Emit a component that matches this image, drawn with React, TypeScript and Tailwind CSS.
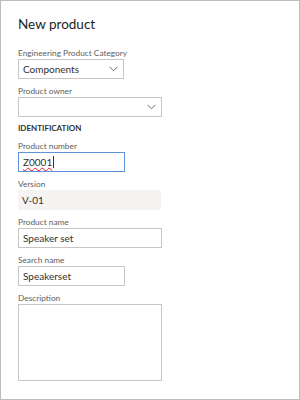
const Chevron = () => (
  <svg width="9" height="6" viewBox="0 0 9 6" fill="none" className="shrink-0">
    <path d="M0.5 0.8 L4.5 4.8 L8.5 0.8" stroke="#605e5c" strokeWidth="0.9" />
  </svg>
);

const Label = ({ children }: { children: React.ReactNode }) => (
  <div className="h-[12px] text-[8.3px] leading-[12px] text-[#605e5c]">{children}</div>
);

export default function App() {
  return (
    <div
      className="w-[300px] h-[400px] border border-[#bcbcbc] bg-white px-[17px] pt-[13px] text-[#323130]"
      style={{ fontFamily: 'Lato, "Open Sans", sans-serif' }}
    >
      <h1 className="h-[20px] text-[13.5px] leading-[20px] text-[#201f1e]">New product</h1>

      <div className="mt-[13px]">
        <Label>Engineering Product Category</Label>
        <div className="flex h-[20px] w-[106px] items-center justify-between border border-[#c8c6c4] pl-[4px] pr-[5px] text-[10px]">
          <span>Components</span>
          <Chevron />
        </div>
      </div>

      <div className="mt-[6px]">
        <Label>Product owner</Label>
        <div className="flex h-[20px] w-[144px] items-center justify-end border border-[#c8c6c4] pr-[5px]">
          <Chevron />
        </div>
      </div>

      <div className="mt-[5px] h-[12px] text-[8px] font-bold leading-[12px] text-[#323130]">
        IDENTIFICATION
      </div>

      <div className="mt-[6px]">
        <Label>Product number</Label>
        <div className="flex h-[20px] w-[107px] items-center border border-[#5f94dc] pl-[4px] text-[10px]">
          <span className="underline decoration-wavy decoration-[#e81123] decoration-1 underline-offset-1">Z0001</span>
          <span className="ml-[1px] h-[12px] w-px bg-[#323130]" />
        </div>
      </div>

      <div className="mt-[6px]">
        <Label>Version</Label>
        <div className="flex h-[20px] w-[143px] items-center bg-[#f5f4f3] pl-[4px] text-[10px]">V-01</div>
      </div>

      <div className="mt-[6px]">
        <Label>Product name</Label>
        <div className="flex h-[20px] w-[144px] items-center border border-[#c8c6c4] pl-[4px] text-[10px]">
          Speaker set
        </div>
      </div>

      <div className="mt-[6px]">
        <Label>Search name</Label>
        <div className="flex h-[20px] w-[107px] items-center border border-[#c8c6c4] pl-[4px] text-[10px]">
          Speakerset
        </div>
      </div>

      <div className="mt-[6px]">
        <Label>Description</Label>
        <div className="h-[77px] w-[144px] border border-[#c8c6c4]" />
      </div>
    </div>
  );
}
